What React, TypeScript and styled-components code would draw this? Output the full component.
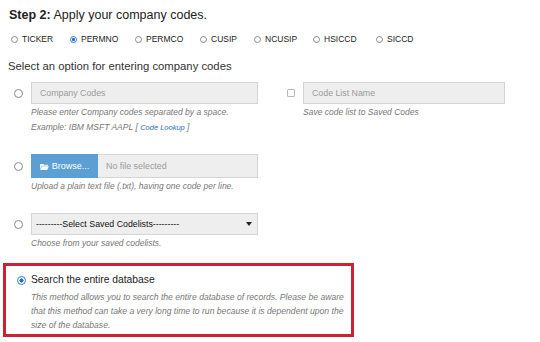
import styled, { createGlobalStyle } from 'styled-components';

const GlobalStyle = createGlobalStyle`
  body {
    margin: 0;
    background: #ffffff;
    font-family: "Liberation Sans", Arial, sans-serif;
    color: #333333;
  }
`;

const Page = styled.div`
  width: 540px;
  height: 342px;
  padding: 7px 0 0 0;
  box-sizing: border-box;
  overflow: hidden;
`;

const Title = styled.h2`
  margin: 0 0 0 9px;
  font-size: 12.5px;
  font-weight: normal;
  line-height: 16px;
  color: #222;
  b {
    font-weight: bold;
  }
`;

const CodeTypes = styled.div`
  display: flex;
  align-items: center;
  margin: 9px 0 0 11px;
  height: 14px;
`;

const CodeType = styled.label<{ $w: number }>`
  display: flex;
  align-items: center;
  gap: 4px;
  width: ${(p) => p.$w}px;
  font-size: 8.5px;
  color: #222;
`;

const Dot = styled.span<{ $on?: boolean; $size?: number }>`
  display: inline-block;
  box-sizing: border-box;
  width: ${(p) => p.$size ?? 9}px;
  height: ${(p) => p.$size ?? 9}px;
  border-radius: 50%;
  border: 1px solid ${(p) => (p.$on ? '#2f7fd6' : '#8a8a8a')};
  background: ${(p) => (p.$on ? 'radial-gradient(circle, #1a6fd8 0 38%, #ffffff 46%)' : '#fff')};
  flex: none;
`;

const Box = styled.span`
  display: inline-block;
  box-sizing: border-box;
  width: 8px;
  height: 8px;
  border: 1px solid #b8b8b8;
  border-radius: 1px;
  background: #fff;
`;

const Heading = styled.div`
  margin: 12px 0 0 8px;
  font-size: 11.3px;
  line-height: 16px;
  color: #333;
`;

const Option = styled.div<{ $top: number }>`
  display: grid;
  grid-template-columns: 31px 227px 45px 202px;
  margin-top: ${(p) => p.$top}px;
`;

const Pick = styled.div<{ $h: number; $left?: number }>`
  height: ${(p) => p.$h}px;
  display: flex;
  align-items: center;
  justify-content: ${(p) => (p.$left !== undefined ? 'flex-start' : 'center')};
  padding-left: ${(p) => p.$left ?? 6}px;
`;

const Field = styled.div<{ $h: number }>`
  height: ${(p) => p.$h}px;
  box-sizing: border-box;
  border: 1px solid #d4d4d4;
  background: #eeeeee;
  display: flex;
  align-items: center;
  padding-left: 8px;
  font-size: 8.8px;
  color: #9a9a9a;
`;

const Help = styled.div`
  font-size: 8.5px;
  font-style: italic;
  line-height: 15px;
  color: #777;
  margin-top: 1px;
  white-space: nowrap;
  a {
    font-size: 7.5px;
    color: #2a6fb6;
    text-decoration: none;
  }
`;

const FileField = styled.div`
  height: 24px;
  display: flex;
  border: 1px solid #d4d4d4;
  box-sizing: border-box;
  background: #eeeeee;
`;

const Browse = styled.span`
  width: 67px;
  background: #5b9fd3;
  color: #fff;
  font-size: 9px;
  display: flex;
  align-items: center;
  justify-content: center;
  gap: 3px;
  margin: -1px 0 -1px -1px;
`;

const FileName = styled.span`
  display: flex;
  align-items: center;
  padding-left: 8px;
  font-size: 8.9px;
  color: #9a9a9a;
`;

const Select = styled.div`
  height: 22px;
  box-sizing: border-box;
  border: 1px solid #d4d4d4;
  background: #eeeeee;
  display: flex;
  align-items: center;
  justify-content: space-between;
  padding: 0 5px 0 4px;
  font-size: 8.8px;
  color: #111;
`;

const Caret = styled.span`
  width: 0;
  height: 0;
  border-left: 3px solid transparent;
  border-right: 3px solid transparent;
  border-top: 4px solid #222;
`;

const Highlight = styled.div`
  margin: 12px 0 0 3px;
  width: 351px;
  height: 74px;
  box-sizing: border-box;
  border: 3px solid #cc2233;
  display: grid;
  grid-template-columns: 25px 1fr;
  padding: 6px 0 0 0;
`;

const BigTitle = styled.div`
  font-size: 10.3px;
  line-height: 16px;
  color: #222;
`;

const Para = styled.div`
  font-size: 8.6px;
  font-style: italic;
  line-height: 14px;
  color: #777;
  margin-top: 2px;
  width: 318px;
`;

function FolderIcon() {
  return (
    <svg width="9" height="7" viewBox="0 0 10 8">
      <path d="M0 1h3.5l1 1H9v1H2L0 7z" fill="#fff" />
      <path d="M2.2 3.6H10L8 8H0z" fill="#fff" />
    </svg>
  );
}

const codeTypes = [
  { label: 'TICKER', w: 59 },
  { label: 'PERMNO', w: 65 },
  { label: 'PERMCO', w: 65 },
  { label: 'CUSIP', w: 54 },
  { label: 'NCUSIP', w: 59 },
  { label: 'HSICCD', w: 63 },
  { label: 'SICCD', w: 50 },
];

export default function App() {
  return (
    <Page>
      <GlobalStyle />
      <Title>
        <b>Step 2:</b> Apply your company codes.
      </Title>
      <CodeTypes>
        {codeTypes.map((c) => (
          <CodeType key={c.label} $w={c.w}>
            <Dot $on={c.label === 'PERMNO'} $size={7} />
            {c.label}
          </CodeType>
        ))}
      </CodeTypes>
      <Heading>Select an option for entering company codes</Heading>

      <Option $top={8}>
        <Pick $h={22}>
          <Dot />
        </Pick>
        <div>
          <Field $h={22}>Company Codes</Field>
          <Help>
            Please enter Company codes separated by a space.
            <br />
            Example: IBM MSFT AAPL [ <a href="#">Code Lookup</a> ]
          </Help>
        </div>
        <Pick $h={22} $left={29}>
          <Box />
        </Pick>
        <div>
          <Field $h={22}>Code List Name</Field>
          <Help>Save code list to Saved Codes</Help>
        </div>
      </Option>

      <Option $top={19}>
        <Pick $h={24}>
          <Dot />
        </Pick>
        <div>
          <FileField>
            <Browse>
              <FolderIcon />
              Browse...
            </Browse>
            <FileName>No file selected</FileName>
          </FileField>
          <Help>Upload a plain text file (.txt), having one code per line.</Help>
        </div>
      </Option>

      <Option $top={19}>
        <Pick $h={22}>
          <Dot />
        </Pick>
        <div>
          <Select>
            ---------Select Saved Codelists---------
            <Caret />
          </Select>
          <Help>Choose from your saved codelists.</Help>
        </div>
      </Option>

      <Highlight>
        <Pick $h={16}>
          <Dot $on $size={9} />
        </Pick>
        <div>
          <BigTitle>Search the entire database</BigTitle>
          <Para>
            This method allows you to search the entire database of records. Please be aware
            that this method can take a very long time to run because it is dependent upon the
            size of the database.
          </Para>
        </div>
      </Highlight>
    </Page>
  );
}
